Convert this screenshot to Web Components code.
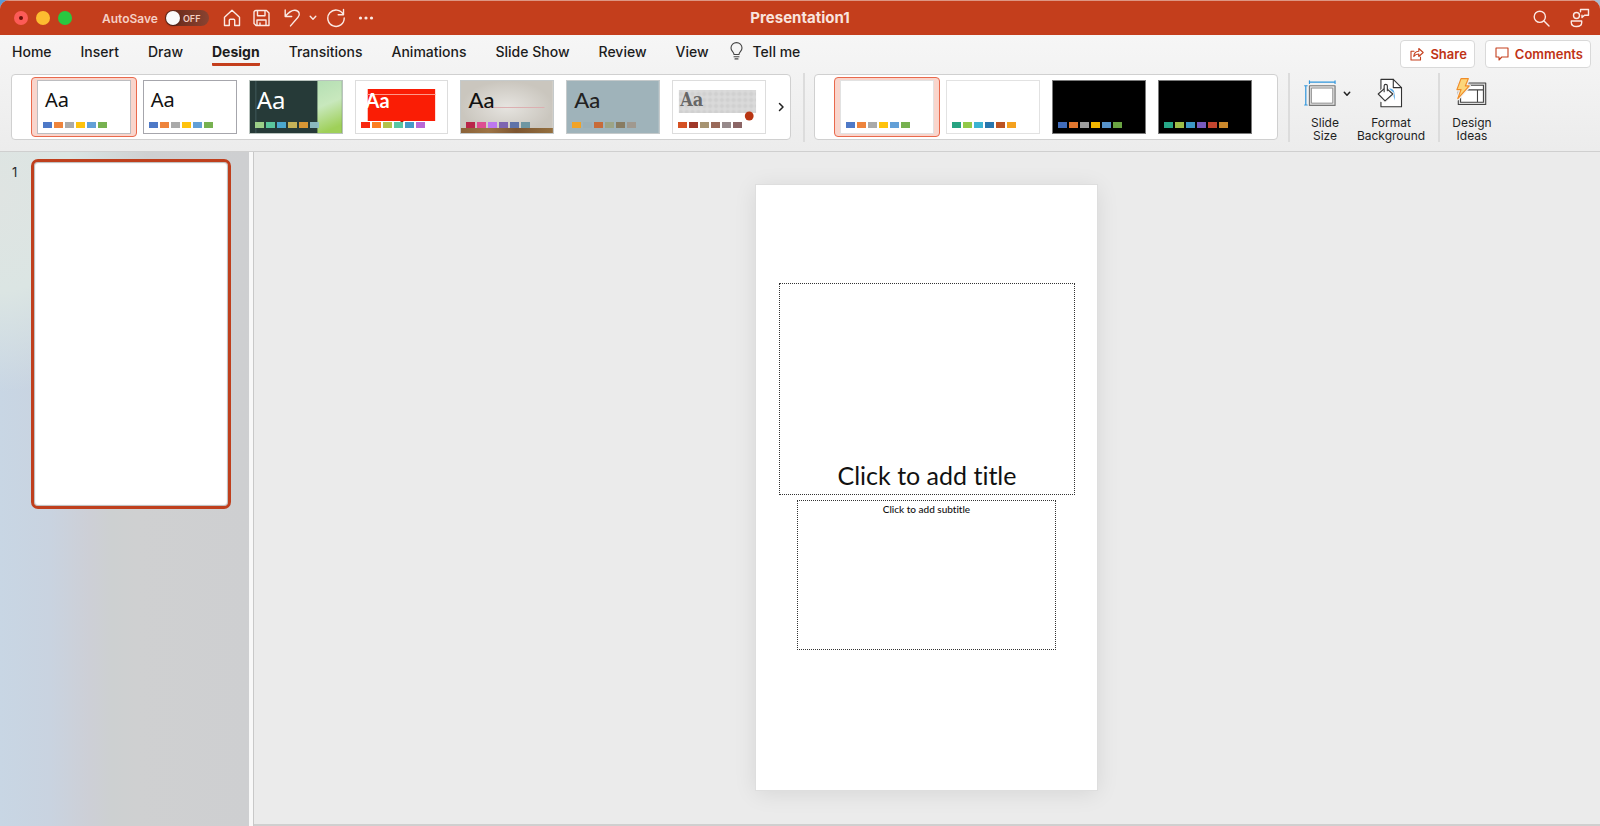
<!DOCTYPE html>
<html lang="en">
<head>
<meta charset="utf-8">
<title>Presentation1</title>
<style>
html, body { height: 100%; }
body { margin: 0; background: linear-gradient(90deg, #5b9bd8, #a9bcd0); font-family: Inter, "Liberation Sans", sans-serif; color: #262626; }
</style>
</head>
<body>
<app-window>
  <title-bar slot="title" document="Presentation1"></title-bar>
  <ribbon-tabs slot="ribbon"></ribbon-tabs>
  <ribbon-design slot="ribbon"></ribbon-design>
  <slide-navigator slot="side"></slide-navigator>
  <slide-canvas slot="main">
    <slide-placeholder kind="title" slot="title">Click to add title</slide-placeholder>
    <slide-placeholder kind="subtitle" slot="subtitle">Click to add subtitle</slide-placeholder>
  </slide-canvas>
</app-window>

<script>
function define(name, html, setup) {
  const tpl = document.createElement('template');
  tpl.innerHTML = html;
  customElements.define(name, class extends HTMLElement {
    constructor() {
      super();
      this.attachShadow({ mode: 'open' }).append(tpl.content.cloneNode(true));
    }
    connectedCallback() { if (setup) setup(this, this.shadowRoot); }
  });
}

const reset = `:host,*{box-sizing:border-box} button{font:inherit;color:inherit;background:none;border:0;padding:0;margin:0;display:inline-flex;align-items:center;justify-content:center} svg{display:block;fill:none;stroke-linecap:round;stroke-linejoin:round}`;

define('app-window', `
<style>
:host{display:flex;flex-direction:column;height:100vh;overflow:hidden;border-radius:9px 9px 0 0;background:#ebebeb}
.ribbon{background:linear-gradient(#f6f6f6,#ececec);border-bottom:1px solid #cfcfcf;display:flow-root}
.body{display:grid;grid-template-columns:249px 1fr;flex:1;min-height:0}
</style>
<slot name="title"></slot>
<header class="ribbon"><slot name="ribbon"></slot></header>
<div class="body"><slot name="side"></slot><slot name="main"></slot></div>`);

define('title-bar', `
<style>${reset}
:host{display:grid;grid-template-columns:1fr auto 1fr;align-items:center;height:35px;background:#c43e1c;border-top:1px solid #dd9684;color:#f9e4de}
.left,.right{display:flex;align-items:center}
.lights{display:flex;gap:8px;margin-left:14px}
.lights button{width:14px;height:14px;border-radius:50%}
.close{background:#fc5b57}.close i{width:4px;height:4px;border-radius:50%;background:#6d0f08}
.min{background:#fdbc30}.max{background:#29c840}
label{display:flex;align-items:center;gap:7px;margin-left:30px;font-size:12px;font-weight:600;color:#f5cfc4}
.switch{display:flex;align-items:center;width:44px;height:16px;border-radius:8px;background:linear-gradient(90deg,#632516,#8a4331)}
.switch input{appearance:none;margin:0 0 0 1px;width:14px;height:14px;border-radius:50%;background:#fafafa;box-shadow:0 1px 2px #0006}
.switch span{font-size:9px;font-weight:600;margin-left:3px}
.tools{display:flex;align-items:center;margin-left:14px}
.tools svg,.right svg{stroke:#fbe9e4;stroke-width:1.4}
.undo{margin-left:14px}.more{margin-left:8px}.redo{margin-left:9px}.dots{margin-left:12px}.save{margin-left:12px}
h1{margin:0;font-size:15px;font-weight:700;line-height:20px}
.right{justify-content:flex-end;gap:20px;padding-right:10px}
</style>
<div class="left">
  <div class="lights"><button class="close" aria-label="Close"><i></i></button><button class="min" aria-label="Minimize"></button><button class="max" aria-label="Full screen"></button></div>
  <label for="auto">AutoSave<span class="switch"><input id="auto" type="checkbox" role="switch"><span>OFF</span></span></label>
  <div class="tools">
    <button aria-label="Home"><svg width="18" height="18"><path d="M1.5 8.2 9 1.2l7.500 7v8.300h-4.800v-5.200a1 1 0 0 0-1-1H7.300a1 1 0 0 0-1 1v5.200H1.500z"/></svg></button>
    <button class="save" aria-label="Save"><svg width="17" height="18"><path d="M3 1.500h10.500l2.500 2.500v12.500H3l-2-2V3.500a2 2 0 0 1 2-2zM4.500 1.500v5.300h7.500V1.500M4 16.500v-5.500h9v5.500M7 16.500v-2.500"/></svg></button>
    <button class="undo" aria-label="Undo"><svg width="17" height="18"><path d="M1.200 1v6.500h6.500M1.400 7.300C5 3 8 1 11 1.300c4.400.4 5.500 4.300 3 7L6.500 16.900"/></svg></button>
    <button class="more" aria-label="Undo history"><svg width="8" height="6"><path d="M1.200 1.300 4 4.200l2.800-2.900"/></svg></button>
    <button class="redo" aria-label="Redo"><svg width="20" height="20"><path d="M17.500 1.500v5.300h-5.300M17.300 6.500A8.200 8.200 0 1 0 18.200 10"/></svg></button>
    <button class="dots" aria-label="More"><svg width="16" height="4"><g fill="#fbe9e4" stroke="none"><circle cx="2.500" cy="2" r="1.600"/><circle cx="8" cy="2" r="1.600"/><circle cx="13.500" cy="2" r="1.600"/></g></svg></button>
  </div>
</div>
<h1></h1>
<div class="right">
  <button aria-label="Search"><svg width="17" height="17"><circle cx="6.800" cy="6.800" r="5.600"/><path d="m11 11 5 5"/></svg></button>
  <button aria-label="Presence"><svg width="20" height="20"><circle cx="6.500" cy="7.500" r="3"/><path d="M1.300 13h10.400v1.500c0 2.600-2.200 4-5.200 4s-5.200-1.400-5.200-4zM10.500 3.800V1.500h8v5.700h-4l-2.500 2.300V7.200"/></svg></button>
</div>`, (el, root) => { root.querySelector('h1').textContent = el.getAttribute('document'); });

define('ribbon-tabs', `
<style>${reset}
:host{display:flex;justify-content:space-between;align-items:flex-start;height:38px;padding:5px 9px 0 12px;color:#222}
nav{display:flex;gap:29px;font-size:14px;font-weight:500;line-height:23px;color:#1c1c1c}
nav button{display:block;height:26px;border-bottom:3px solid transparent}
nav button[aria-selected=true]{font-weight:700;border-color:#c43e1c;border-radius:1px}
nav .tell{display:flex;align-items:flex-start;gap:10px;margin-left:-8px;font-weight:500}
.tell svg{stroke:#444;stroke-width:1.1;margin-top:2px}
.actions{display:flex;gap:10px}
.actions button{height:28px;padding:0 7px 0 9px;gap:6px;background:#fff;border:1px solid #d9d9d9;border-radius:4px;font-size:13px;font-weight:600;color:#c03316}
.actions svg{stroke:#c5401e;stroke-width:1.100}
</style>
<nav role="tablist"><button role="tab">Home</button><button role="tab">Insert</button><button role="tab">Draw</button><button role="tab" aria-selected="true">Design</button><button role="tab">Transitions</button><button role="tab">Animations</button><button role="tab">Slide Show</button><button role="tab">Review</button><button role="tab">View</button><button class="tell"><svg width="13" height="18"><path d="M4 12.500c0-2.700-3-3.200-3-6.400a5.500 5.500 0 0 1 11 0c0 3.200-3 3.700-3 6.400zM4 14.800h5M5 16.900h3"/></svg>Tell me</button></nav>
<div class="actions">
<button><svg width="14" height="14"><path d="M4 4.200H1v8.800h9.500v-3M3.800 9.500C4 6 6 4.300 8.800 4.200V1.500l4.400 4-4.400 4V7C6.800 7 5 7.700 3.800 9.500z"/></svg>Share</button>
<button><svg width="14" height="14"><path d="M1 1h12v9H6.800L4 13v-3H1z"/></svg>Comments</button>
</div>`);

define('theme-thumb', `
<style>${reset}
:host{display:block;height:60px;padding:2px 5px;border:1px solid transparent;border-radius:4px;min-width:0}
:host([selected]){background:#f9d5cc;border-color:#e9694c}
button{display:flex;flex-direction:column;align-items:flex-start;width:100%;height:54px;border:1px solid #bdbdc0;padding:7px 0 5px 5px;background:#fff;color:#111;position:relative;overflow:hidden}
.aa{font:20px/24px "Noto Sans","Open Sans",sans-serif;margin-left:2px;position:relative}
.sw{display:flex;gap:2px;position:relative;margin-top:auto}
.sw i{width:9px;height:6px;opacity:.95}
.art{position:absolute;inset:0;width:100%;height:100%}
:host([look=second]) button{border-color:#a6a6ac}
:host([look=forest]) button{color:#fff;border-color:#b9c3be}
:host([look=forest]) .aa{font-size:24px}
:host([look=red]) button{color:#fff;border-color:#ddd}
:host([look=red]) .aa{font:bold 20px/24px Lato,sans-serif;margin-left:5px}
:host([look=wood]) .aa,:host([look=slate]) .aa{font:500 22px/24px Lato,sans-serif}
:host([look=wood]) button,:host([look=slate]) button{border-color:#c5cacb}
:host([look=slate]) button{color:#222}
:host([look=slab]) button{color:#666;border-color:#ddd}
:host([look=slab]) .aa{font:bold 18px/24px "DejaVu Serif Condensed","DejaVu Serif",serif}
:host([look=plain]) button{border-color:#e2e2e2}
:host([look=black]) button{background:#000;border-color:#7a7a7a}
</style>
<button><span class="aa"></span><span class="sw"></span></button>`, (el, root) => {
  const art = {
    forest: '<rect width="94" height="52" fill="#263a38"/><path d="M6 0v52" stroke="#40595a"/><rect x="69" width="25" height="52" fill="url(#g)"/><defs><linearGradient id="g" x1="0" y1="0" x2=".2" y2="1"><stop stop-color="#b5dfb4"/><stop offset=".5" stop-color="#c8e8bd"/><stop offset="1" stop-color="#9fd059"/></linearGradient></defs>',
    red: '<path d="M12 8h69v32H12z" fill="#fa1d05"/><path d="M12 13.500h69" stroke="#ff9a8b"/><path d="M45 40h4l-2 2z" fill="#b41b08"/>',
    wood: '<defs><radialGradient id="w"><stop stop-color="#e6e4e0"/><stop offset="1" stop-color="#cac6be"/></radialGradient><linearGradient id="f"><stop stop-color="#8a6238"/><stop offset=".3" stop-color="#9d7445"/><stop offset=".6" stop-color="#7d5530"/><stop offset="1" stop-color="#94703f"/></linearGradient></defs><rect width="94" height="52" fill="url(#w)"/><path d="M18 26.500h67" stroke="#dcaeb0"/><rect y="47" width="94" height="5" fill="url(#f)"/>',
    slate: '<rect width="94" height="52" fill="#9fb3ba"/>',
    slab: '<defs><pattern id="p" width="6" height="6" patternUnits="userSpaceOnUse"><rect width="6" height="6" fill="#d6d6d6"/><path d="M0 1h6M2 0v6" stroke="#cfcfcf"/><path d="M0 4h6M5 0v6" stroke="#dcdcdc"/></pattern></defs><rect x="6" y="9" width="79" height="23" fill="url(#p)"/><circle cx="78" cy="35" r="4.500" fill="#b83512"/>'
  }[el.getAttribute('look')];
  const button = root.querySelector('button');
  button.setAttribute('aria-label', el.getAttribute('name'));
  if (art) button.insertAdjacentHTML('afterbegin', `<svg class="art" viewBox="0 0 94 52" preserveAspectRatio="none">${art}</svg>`);
  const aa = root.querySelector('.aa');
  if (el.hasAttribute('sample')) aa.textContent = 'Aa'; else aa.remove();
  root.querySelector('.sw').innerHTML = el.getAttribute('colors').split(' ').map(c => `<i style="background:#${c}"></i>`).join('');
});

define('ribbon-design', `
<style>${reset}
:host{display:flex;height:78px;padding-left:11px}
.gallery{display:flex;align-items:center;height:66px;margin-top:1px;background:#fff;border:1px solid #d0d0d0;border-radius:4px;padding:2px 19px}
.themes{flex:1 1 780px;padding-right:0}
.variants{flex:1 1 464px}
.items{display:grid;flex:1;grid-auto-flow:column;grid-auto-columns:1fr}
.next{width:18px;height:60px}
.next svg,.chev svg{stroke:#222;stroke-width:1.500}
hr{width:2px;height:69px;margin:0 9px 0 12px;border:0;background:#dcdcdc;flex:none}
.cmds{display:flex;flex:1 1 322px;font-size:12px;line-height:13px;color:#1f1f1f}
.cmds button{display:flex;flex-direction:column;justify-content:flex-start;height:69px;padding-top:5px}
.cmds svg{margin-bottom:6px}
.group{display:flex;align-items:flex-start}
.group .chev{padding-top:18px;width:10px;margin-left:-6px}
.bg{width:74px;margin-left:2px}.size{width:46px;margin-left:4px}.ideas{width:48px}
.cmds hr{margin-left:10px;margin-right:8px}
</style>
<section class="gallery themes" aria-label="Themes"><div class="items">
<theme-thumb selected sample name="Office Theme" colors="4472c4 ed7d31 a5a5a5 ffc000 5b9bd5 70ad47"></theme-thumb>
<theme-thumb sample look="second" name="Office" colors="4472c4 ed7d31 a5a5a5 ffc000 5b9bd5 70ad47"></theme-thumb>
<theme-thumb sample look="forest" name="Mesh" colors="a1d68b 5ecca1 4dadd6 cdb85a e29b34 8fbfc4"></theme-thumb>
<theme-thumb sample look="red" name="Atlas" colors="f81b02 fc7715 afbf41 50c49f 3b95c4 b560d4"></theme-thumb>
<theme-thumb sample look="wood" name="Gallery" colors="b71e42 de478e bc72f0 795faf 586ea6 6892a0"></theme-thumb>
<theme-thumb sample look="slate" name="Parcel" colors="f6a21d 9bafb5 c96731 9ca383 87795d a0988c"></theme-thumb>
<theme-thumb sample look="slab" name="Wood Type" colors="d34817 9b2d1f a28e6a 956251 918485 855d5d"></theme-thumb>
</div><button class="next" aria-label="More themes"><svg width="7" height="10"><path d="m1.500 1.500 3.500 3.500-3.500 3.500"/></svg></button></section>
<hr>
<section class="gallery variants" aria-label="Variants"><div class="items">
<theme-thumb selected look="plain" name="Variant 1" colors="4472c4 ed7d31 a5a5a5 ffc000 5b9bd5 70ad47"></theme-thumb>
<theme-thumb look="plain" name="Variant 2" colors="1b9e7a 8cc63f 30b0d0 1b6faa b84a16 f39c12"></theme-thumb>
<theme-thumb look="black" name="Variant 3" colors="4472c4 ed7d31 a5a5a5 ffc000 5b9bd5 70ad47"></theme-thumb>
<theme-thumb look="black" name="Variant 4" colors="29b08f a5c74b 409fd0 7e60c8 cf4a32 d58f2e"></theme-thumb>
</div></section>
<div class="cmds"><hr>
<div class="group">
<button class="size"><svg width="46" height="35" viewBox="4 0 46 35"><g stroke="#2f95dc" stroke-width="1.300"><path d="M10 4.500h28M10 3v3M38 3v3M6 8.500v21M4.800 8.500h2.700M4.800 29.500h2.700"/></g><path d="M10 8.500h28v21.500H10z" stroke="#777" stroke-width="1.300" fill="#e2e2e2"/><path d="M12.500 11h23v16.500h-23z" stroke="#888" stroke-width="1" fill="#fff"/></svg>Slide<br>Size</button>
<button class="chev" aria-label="Slide size options"><svg width="8" height="6"><path d="M1.300 1.300 4 4.200l2.700-2.900"/></svg></button>
<button class="bg"><svg width="34" height="35" viewBox="2 0 34 35"><path d="M8 18.500V1.500h13.500l9 9V31.500H8v-5" fill="#fff" stroke="#333" stroke-width="1.200"/><path d="M21.500 1.500v9h9" stroke="#333" stroke-width="1.200"/><path d="M17 11.500c4.500-.5 7 3 6 13-1-4-1.200-7-4.500-8z" fill="#55a9e8"/><path d="m13 10.500 8 7-8.500 7.500-7.500-7.500z" fill="#fff" stroke="#f2f2f2" stroke-width="3.500"/><path d="m13 10.500 8 7-8.500 7.500-7.500-7.500z" fill="#fff" stroke="#333" stroke-width="1.200"/><path d="M11.500 15V8.500c0-2 3.500-2 3.500 0V14" stroke="#333" stroke-width="1.200" fill="#fff"/></svg>Format<br>Background</button>
</div>
<hr>
<button class="ideas"><svg width="36" height="35" viewBox="1 0 36 35"><path d="M4 5.500h30V29H4z" fill="#ddd" stroke="#444" stroke-width="1.200"/><path d="M6.500 8h25v5h-25zM6.500 13H25v13.500H6.500zM25 13h6.500v13.500H25z" fill="#fff" stroke="#444" stroke-width="1.200"/><path d="M7 .7h8l-3.300 8H16L3.500 22.500 7 12.700H2.500z" fill="#fcd67a" stroke="#f2f2f2" stroke-width="4"/><path d="M7 .7h8l-3.300 8H16L3.500 22.500 7 12.700H2.500z" fill="#fcd67a" stroke="#f08c28" stroke-width="1.300"/></svg>Design<br>Ideas</button>
</div>`);

define('slide-navigator', `
<style>${reset}
:host{display:block;min-height:0;background:radial-gradient(150px 200px at 0 40px,#dfe4e2,#dbe5e3 50%,#dbe5e300),linear-gradient(90deg,#c8d6e4 0,#c9d3e0 20%,#cdcfd6 36%,#cdd0d1 45%,#cfd0d1 55%,#cecfd1 100%)}
ol{list-style:none;margin:0;padding:7px 18px 0 10px}
li{display:grid;grid-template-columns:21px 1fr}
.n{font-size:13px;line-height:26px;color:#2b2b2b;padding-left:2px}
button{display:block;width:100%;aspect-ratio:200/350;background:#fff;border:3px solid #bf3f1d;border-radius:7px;box-shadow:inset 0 0 1px 1px #bbb}
</style>
<ol><li><span class="n">1</span><button aria-label="Slide 1"></button></li></ol>`);

define('slide-canvas', `
<style>${reset}
:host{display:flex;justify-content:center;min-height:0;padding:33px 0 36px;border-left:4px solid #f8f8f8;background:#ebebeb;box-shadow:inset 1px 0 #c8c8c8,inset 0 -2px #cfcfcf}
.slide{display:grid;grid-template:98fr 213fr 5fr 150fr 140fr / 23fr 18fr 258fr 19fr 22fr;height:100%;aspect-ratio:9/16;background:#fff;box-shadow:0 0 0 1px #dedede,0 3px 22px #00000018}
::slotted([slot=title]){grid-area:2/2/3/5}
::slotted([slot=subtitle]){grid-area:4/3/5/4}
</style>
<article class="slide"><slot name="title"></slot><slot name="subtitle"></slot></article>`);

define('slide-placeholder', `
<style>${reset}
:host{display:flex;flex-direction:column;border:1px dotted #333;min-width:0;text-align:center;color:#111}
:host([kind=title]){justify-content:flex-end}
div{outline:0;font-variant-ligatures:none}
:host([kind=title]) div{font:400 25px/38px Lato,sans-serif;font-variant-ligatures:none}
:host([kind=subtitle]) div{font:500 10px/16px Lato,sans-serif;font-variant-ligatures:none}
</style>
<div role="textbox" contenteditable="true"><slot></slot></div>`);
</script>
</body>
</html>
